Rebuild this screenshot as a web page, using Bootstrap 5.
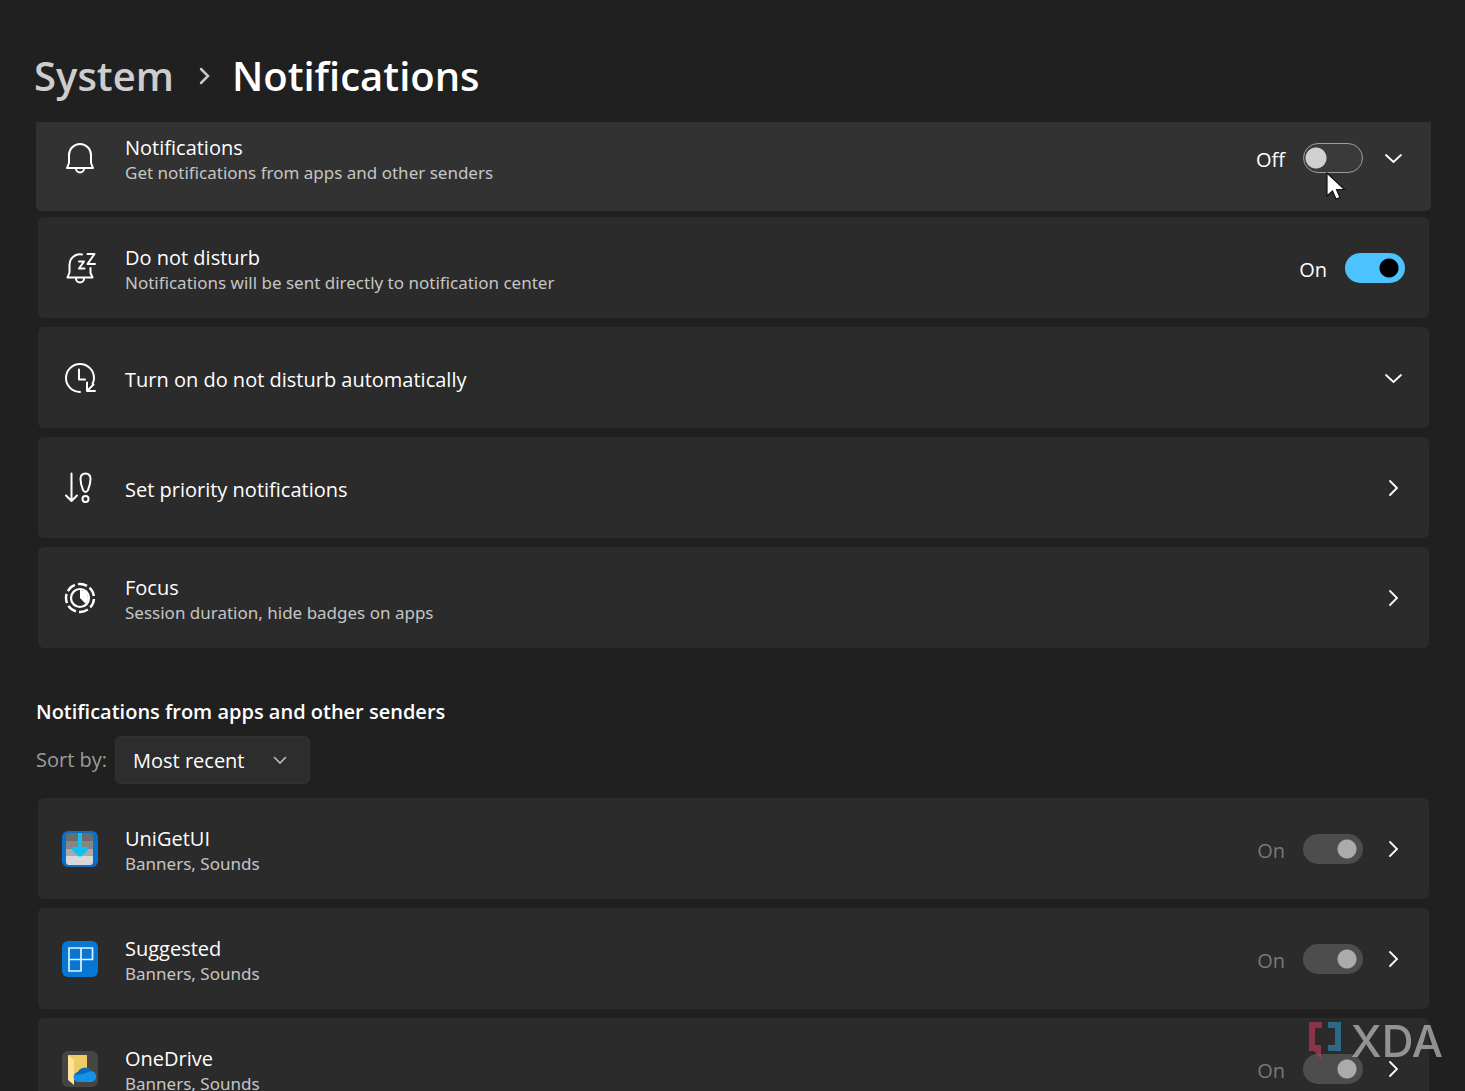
<!DOCTYPE html>
<html lang="en" data-bs-theme="dark">
<head>
<meta charset="utf-8">
<meta name="viewport" content="width=device-width, initial-scale=1">
<title>System - Notifications</title>
<link href="https://cdn.jsdelivr.net/npm/bootstrap@5.3.0/dist/css/bootstrap.min.css" rel="stylesheet">
<style>
  body { background: #202020; color: #fff; font-family: "Open Sans", "Noto Sans", sans-serif; font-size: 20px; }
  .settings-page { height: 100vh; padding: 48px 34px 0 36px; }
  .crumbs { font-size: 40px; line-height: 56px; font-weight: 600; margin: 0 0 18px -2px; }
  .crumbs a { color: #cdcdcd; }
  .crumbs h1 { font-size: 40px; line-height: 56px; font-weight: 600; }
  .crumbs svg { margin: 0 18px 0 22px; }
  .setting-stack { gap: 9px; }
  .setting-row { min-height: 101px; margin: 0 2px; padding: 0 24px; background: #2b2b2b; border-radius: 6px; }
  .setting-row.hovered { min-height: 89px; margin: 0 0 -3px; padding: 0 26px 18px; background: #323232; border-radius: 0 0 6px 6px; }
  .row-icon { width: 36px; height: 36px; margin-right: 27px; flex: none; }
  .line-icon { fill: none; stroke: #fff; stroke-width: 2; stroke-linecap: round; stroke-linejoin: round; }
  .row-text { padding-top: 4px; }
  .row-title { font-size: 20px; line-height: 26px; font-weight: 400; margin: 0; }
  .row-sub { font-family: "Noto Sans", "Open Sans", sans-serif; font-size: 17px; line-height: 24px; color: #c5c5c5; }
  .row-controls { gap: 18px; }
  .state { line-height: 26px; padding-top: 4px; }
  .state.dim { color: #787878; }
  .toggle.form-check-input { width: 60px; height: 30px; margin: 0; border-radius: 15px; border: 1px solid #9d9d9d; background: #3a3a3a radial-gradient(circle at 12px 14px, #d0d0d0 10px, transparent 11px) no-repeat; }
  .toggle.form-check-input:checked { border: 0; background: #4cc2ff radial-gradient(circle at 44px 15px, #000 9px, transparent 10px) no-repeat; }
  .toggle.form-check-input:disabled { opacity: 1; background: #4d4d4d radial-gradient(circle at 44px 15px, #ababab 9px, transparent 10px) no-repeat; }
  .chev { width: 24px; height: 24px; border: 0; }
  .section-title { font-size: 20px; line-height: 28px; font-weight: 600; margin: 50px 0 10px; }
  .sort-bar { gap: 8px; margin-bottom: 14px; }
  .sort-bar label { color: #9b9b9b; }
  .sort-bar .form-select { width: 195px; height: 48px; padding: 2px 50px 0 17px; font-size: 20px; color: #fff; background-color: #2d2d2d; border-color: #323232; border-radius: 6px;
    background-image: url("data:image/svg+xml,%3Csvg xmlns='http://www.w3.org/2000/svg' viewBox='0 0 16 16'%3E%3Cpath fill='none' stroke='%23bdbdbd' stroke-width='1.6' stroke-linecap='round' d='M2.5 5.5 8 11l5.5-5.5'/%3E%3C/svg%3E"); background-size: 16px; background-position: right 21px center; }
  .pointer { position: absolute; left: 23px; top: 29px; }
  .watermark { right: 22px; bottom: 28px; opacity: .62; gap: 9px; pointer-events: none; }
  .watermark span { font: 500 44px/44px Inter, sans-serif; color: #d4d4d4; }
</style>
</head>
<body>
<svg class="d-none" aria-hidden="true">
  <symbol id="right" viewBox="0 0 24 24"><path d="M9 5l7 7-7 7" fill="none" stroke="#fff" stroke-width="1.800" stroke-linecap="round"/></symbol>
  <symbol id="down" viewBox="0 0 24 24"><path d="M5 9l7.500 7 7.500-7" fill="none" stroke="#fff" stroke-width="1.800" stroke-linecap="round"/></symbol>
</svg>
<main class="settings-page overflow-hidden">
  <nav class="crumbs d-flex align-items-center" aria-label="Breadcrumb">
    <a href="#" class="text-decoration-none">System</a>
    <svg width="18" height="22" viewBox="0 0 18 22"><path d="M5 4l7 7-7 7" fill="none" stroke="#c8c8c8" stroke-width="2.500" stroke-linecap="round"/></svg>
    <h1 class="m-0">Notifications</h1>
  </nav>

  <section class="setting-stack d-flex flex-column">
    <div class="setting-row hovered d-flex align-items-center">
      <svg class="row-icon line-icon" viewBox="0 0 36 36"><path d="M18 4a11 11 0 0 0-11 11v8l-2 5h26l-2-5v-8a11 11 0 0 0-11-11zM14 28.500a4 4 0 0 0 8 0"/></svg>
      <div class="row-text flex-grow-1">
        <h2 class="row-title">Notifications</h2>
        <div class="row-sub">Get notifications from apps and other senders</div>
      </div>
      <div class="row-controls d-flex align-items-center">
        <label class="state" for="t-notif">Off</label>
        <div class="position-relative d-flex">
          <input class="form-check-input toggle" type="checkbox" role="switch" id="t-notif">
          <svg class="pointer" width="20" height="30" viewBox="0 0 20 30"><path d="M1 1v23l5.500-5 3.500 8 4-1.500-3.500-8h8z" fill="#fff" stroke="#111" stroke-width="1.200"/></svg>
        </div>
        <button class="chev btn p-0 d-flex" aria-label="Expand notifications"><svg width="24" height="24"><use href="#down"/></svg></button>
      </div>
    </div>

    <div class="setting-row d-flex align-items-center">
      <svg class="row-icon line-icon" viewBox="0 0 36 36"><path d="M20 4.500q-3-.8-6 .5-6.500 3-6.500 10v7.500l-2 5h25l-2-4.500v-5M14 28.500a4 4 0 0 0 8 0"/><path d="M17 11.500h5l-5 7h5.500M25.500 4h7l-7 10h7.500"/></svg>
      <div class="row-text flex-grow-1">
        <h2 class="row-title">Do not disturb</h2>
        <div class="row-sub">Notifications will be sent directly to notification center</div>
      </div>
      <div class="row-controls d-flex align-items-center">
        <label class="state" for="t-dnd">On</label>
        <input class="form-check-input toggle" type="checkbox" role="switch" id="t-dnd" checked>
      </div>
    </div>

    <div class="setting-row d-flex align-items-center">
      <svg class="row-icon line-icon" viewBox="0 0 36 36"><path d="M18 32a14 14 0 1 1 14-14q0 3-1.500 6M17 9.500v10h6M25 22.500V31h8M25.500 30.500l6-6"/></svg>
      <div class="row-text flex-grow-1"><h2 class="row-title">Turn on do not disturb automatically</h2></div>
      <button class="chev btn p-0 d-flex" aria-label="Expand automatic rules"><svg width="24" height="24"><use href="#down"/></svg></button>
    </div>

    <div class="setting-row d-flex align-items-center">
      <svg class="row-icon line-icon" viewBox="0 0 36 36"><path d="M9.500 3.500V31M4 25.500L9.500 31l5.500-5.500M23.500 3.500q-5 0-5 5.500 0 5 2.500 11 2.500 4 5 0 2.500-6 2.500-11 0-5.500-5-5.500z"/><circle cx="23.500" cy="29" r="3"/></svg>
      <div class="row-text flex-grow-1"><h2 class="row-title">Set priority notifications</h2></div>
      <button class="chev btn p-0 d-flex" aria-label="Open priority notifications"><svg width="24" height="24"><use href="#right"/></svg></button>
    </div>

    <div class="setting-row d-flex align-items-center">
      <svg class="row-icon line-icon" viewBox="0 0 36 36"><circle cx="18" cy="18" r="14" pathLength="84" stroke-dasharray="9 3" stroke-dashoffset="-1" stroke-linecap="butt" stroke-width="2.400"/><circle cx="18" cy="18" r="9" stroke-width="2.200"/><path d="M18 10a8 8 0 0 1 5.500 13.800L18 18z" fill="#fff" stroke="none"/></svg>
      <div class="row-text flex-grow-1">
        <h2 class="row-title">Focus</h2>
        <div class="row-sub">Session duration, hide badges on apps</div>
      </div>
      <button class="chev btn p-0 d-flex" aria-label="Open focus"><svg width="24" height="24"><use href="#right"/></svg></button>
    </div>
  </section>

  <h2 class="section-title">Notifications from apps and other senders</h2>
  <div class="sort-bar d-flex align-items-center">
    <label for="sort">Sort by:</label>
    <select id="sort" class="form-select"><option>Most recent</option><option>Name</option></select>
  </div>

  <section class="setting-stack d-flex flex-column">
    <div class="setting-row d-flex align-items-center">
      <svg class="row-icon" viewBox="0 0 36 36"><rect width="36" height="36" rx="6" fill="#0a6fc9"/><path d="M4 5a3 3 0 0 1 3-3h21a3 3 0 0 1 3 3v5H4z" fill="#6c6c6c"/><path d="M4 10h27v8H4z" fill="#858585"/><path d="M4 18h27v8H4z" fill="#aaa"/><path d="M4 25h27v6a3 3 0 0 1-3 3H7a3 3 0 0 1-3-3z" fill="#d9d9d9"/><path d="M16 2h4v14h5q2 1 1 3l-6 6q-2 1-4 0l-6-6q-1-2 1-3h5z" fill="#12bff0"/></svg>
      <div class="row-text flex-grow-1">
        <h2 class="row-title">UniGetUI</h2>
        <div class="row-sub">Banners, Sounds</div>
      </div>
      <div class="row-controls d-flex align-items-center">
        <label class="state dim" for="t-uni">On</label>
        <input class="form-check-input toggle" type="checkbox" role="switch" id="t-uni" checked disabled>
        <button class="chev btn p-0 d-flex" aria-label="Open UniGetUI"><svg width="24" height="24"><use href="#right"/></svg></button>
      </div>
    </div>

    <div class="setting-row d-flex align-items-center">
      <svg class="row-icon" viewBox="0 0 36 36"><rect width="36" height="36" rx="6" fill="#0877d4"/><path d="M7 7h23.500v11.500H7zM7 18.500h12V30H7zM19 7v11.500" fill="none" stroke="#e2f3ff" stroke-width="1.700"/></svg>
      <div class="row-text flex-grow-1">
        <h2 class="row-title">Suggested</h2>
        <div class="row-sub">Banners, Sounds</div>
      </div>
      <div class="row-controls d-flex align-items-center">
        <label class="state dim" for="t-sug">On</label>
        <input class="form-check-input toggle" type="checkbox" role="switch" id="t-sug" checked disabled>
        <button class="chev btn p-0 d-flex" aria-label="Open Suggested"><svg width="24" height="24"><use href="#right"/></svg></button>
      </div>
    </div>

    <div class="setting-row d-flex align-items-center">
      <svg class="row-icon" viewBox="0 0 36 36"><rect width="36" height="36" rx="6" fill="#464544"/><path d="M6 4h19v25H10z" fill="#efcb66"/><path d="M6 4l6 5v25l-6-5z" fill="#ffe39b"/><path d="M17 31a5 5 0 0 1-1-10 7.500 7.500 0 0 1 13-1 5.600 5.600 0 0 1 1 11z" fill="#1592e6"/><path d="M13 24a7 7 0 0 1 3-3 7.500 7.500 0 0 1 13-1l-8 3z" fill="#0b67b8"/></svg>
      <div class="row-text flex-grow-1">
        <h2 class="row-title">OneDrive</h2>
        <div class="row-sub">Banners, Sounds</div>
      </div>
      <div class="row-controls d-flex align-items-center">
        <label class="state dim" for="t-one">On</label>
        <input class="form-check-input toggle" type="checkbox" role="switch" id="t-one" checked disabled>
        <button class="chev btn p-0 d-flex" aria-label="Open OneDrive"><svg width="24" height="24"><use href="#right"/></svg></button>
      </div>
    </div>
  </section>
</main>
<div class="watermark position-fixed d-flex align-items-center">
  <svg width="34" height="40" viewBox="0 0 34 40"><path d="M1 1h13v6H7v17h6v14l-7-8H1z" fill="#c63a5e"/><path d="M33 1H20v6h7v17h-7v6h13z" fill="#2f8fc0"/></svg>
  <span>XDA</span>
</div>
<script src="https://cdn.jsdelivr.net/npm/bootstrap@5.3.0/dist/js/bootstrap.bundle.min.js"></script>
</body>
</html>
